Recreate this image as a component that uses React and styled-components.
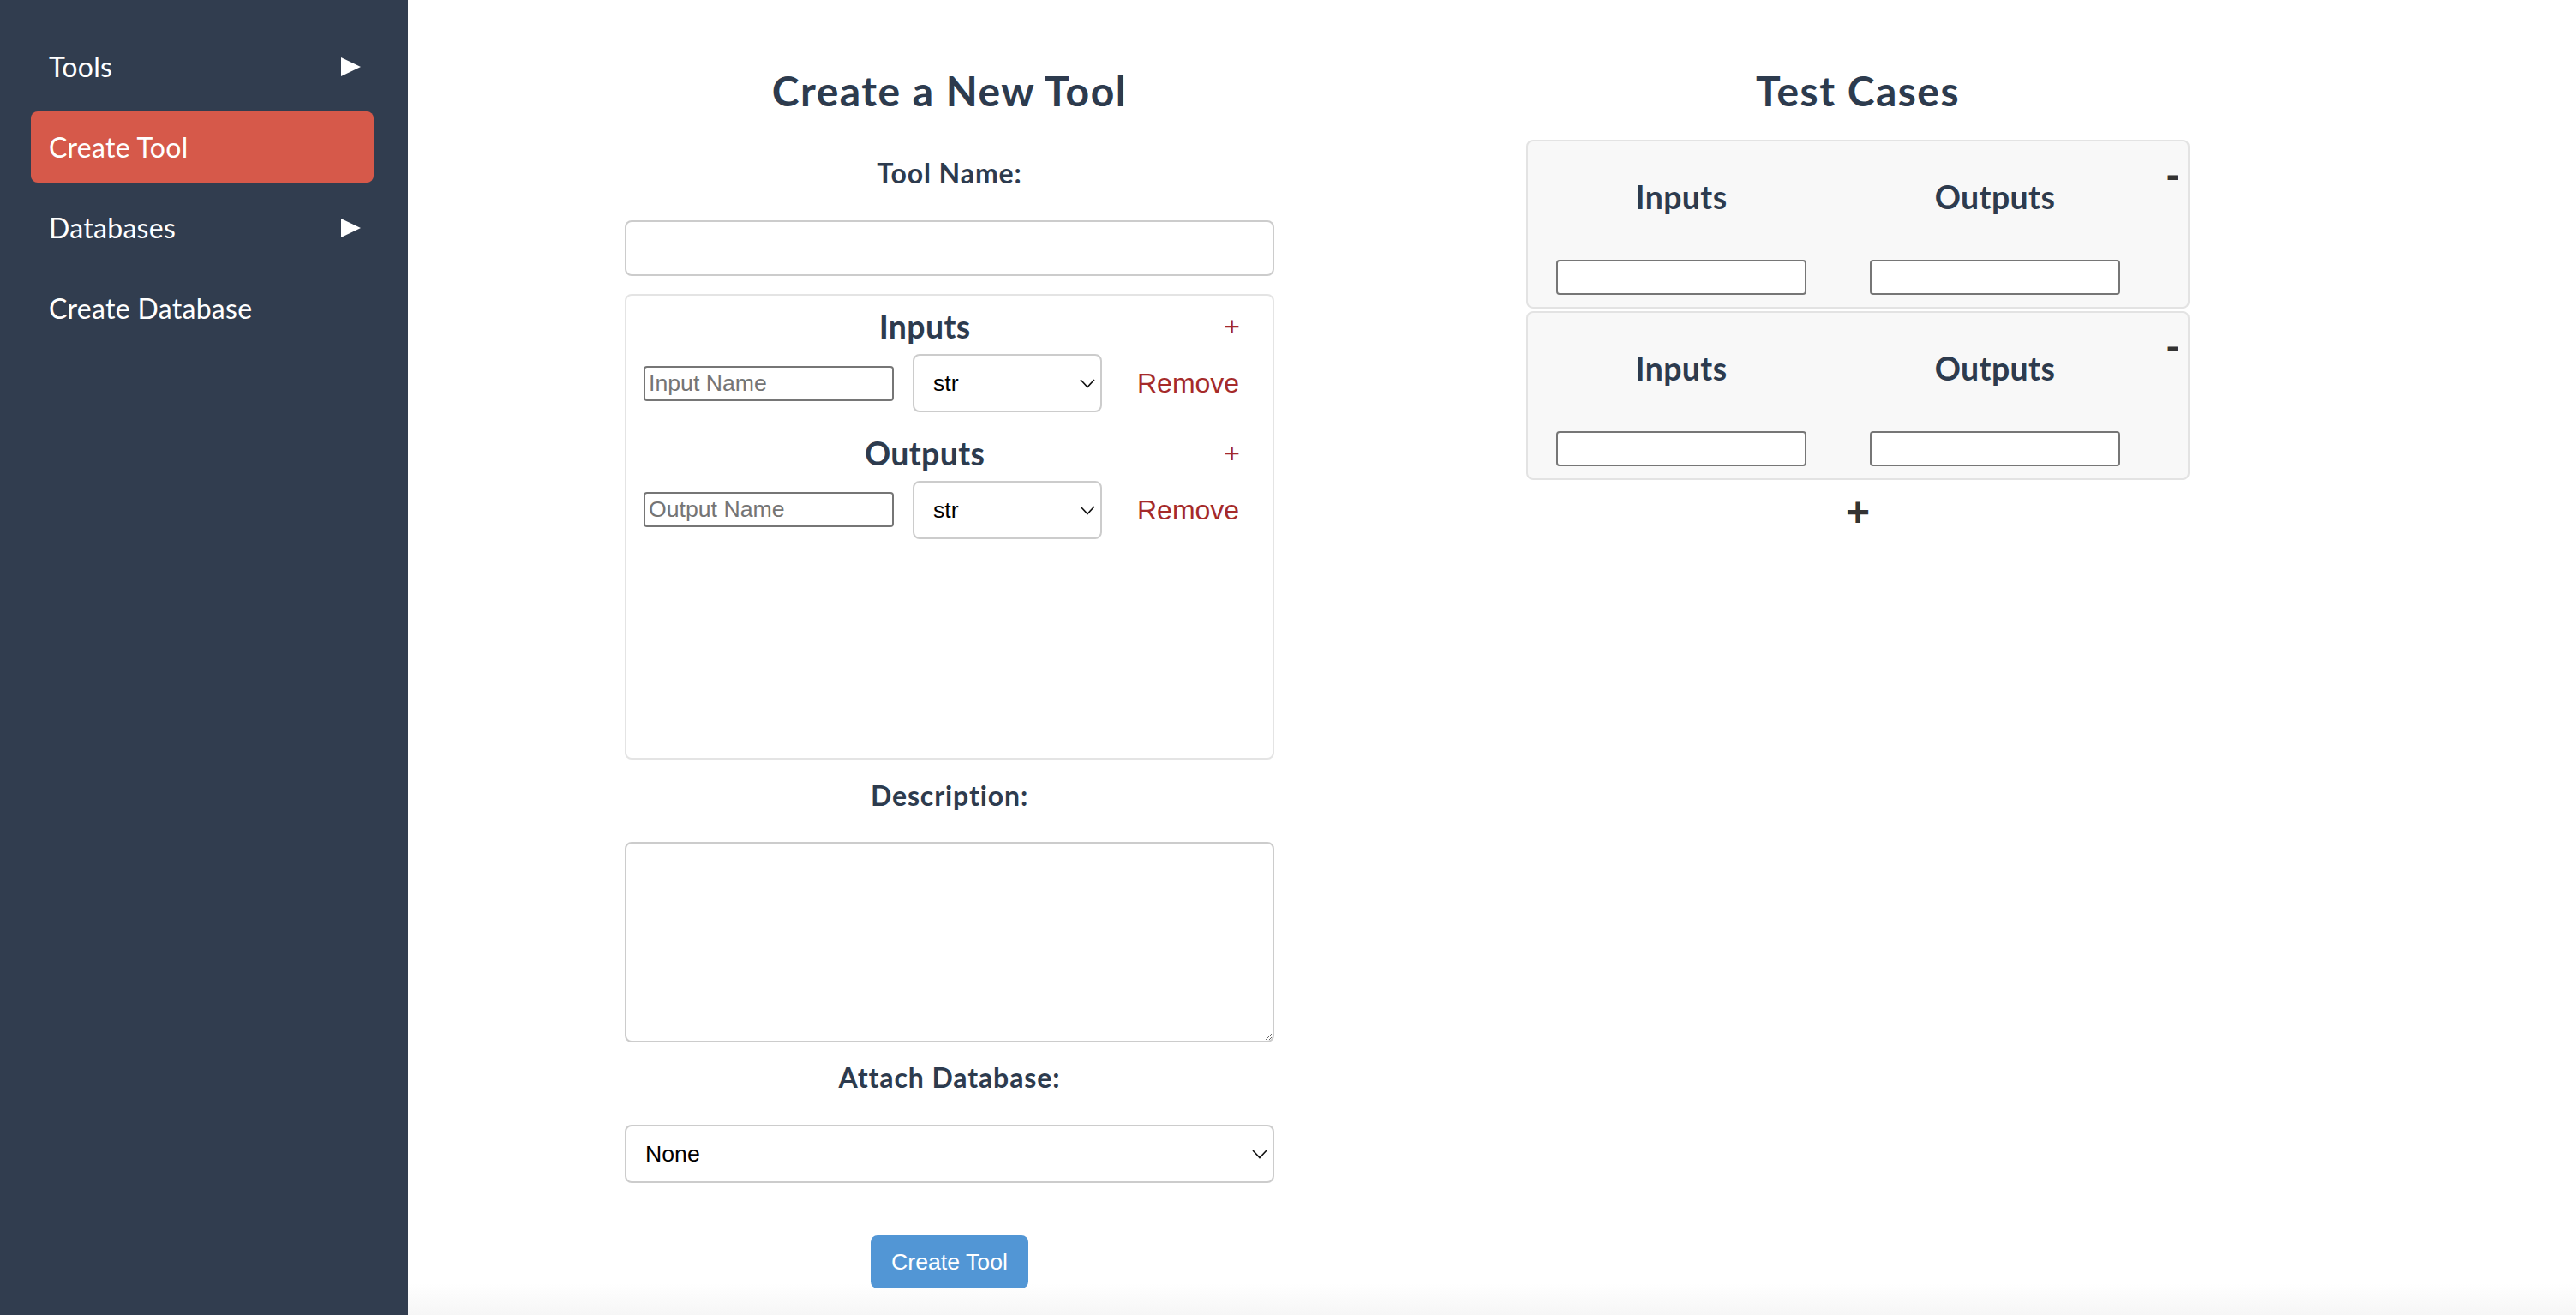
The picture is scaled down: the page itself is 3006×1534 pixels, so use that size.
import React from "react";
import styled, { createGlobalStyle } from "styled-components";

const GlobalStyle = createGlobalStyle`
  html, body { margin: 0; padding: 0; }
  body {
    font-family: Lato, "Noto Sans", "Open Sans", sans-serif;
    color: #2d3b4e;
    background: #ffffff;
  }
  * { box-sizing: border-box; }
`;

const Page = styled.div`
  display: flex;
  min-height: 100vh;
`;

const Sidebar = styled.nav`
  width: 476px;
  flex-shrink: 0;
  background: #313d4f;
  padding: 36px 40px 0 36px;
  display: flex;
  flex-direction: column;
  gap: 11px;
`;

const NavItem = styled.div`
  height: 83px;
  padding: 0 15px 0 21px;
  border-radius: 8px;
  display: flex;
  align-items: center;
  justify-content: space-between;
  background: ${(p) => (p.$active ? "#d6594a" : "transparent")};
  color: #ffffff;
  font-family: Lato, sans-serif;
  font-size: 32px;
  letter-spacing: 0.3px;
  line-height: 1;
`;

const Caret = styled.span`
  width: 0;
  height: 0;
  border-left: 23px solid #ffffff;
  border-top: 11px solid transparent;
  border-bottom: 11px solid transparent;
`;

const Main = styled.main`
  flex: 1;
  display: flex;
  align-items: flex-start;
  gap: 294px;
  padding: 82px 0 0 253px;
  background: linear-gradient(180deg, #ffffff 97.6%, #f6f6f6 100%);
`;

const FormColumn = styled.section`
  width: 758px;
  display: flex;
  flex-direction: column;
`;

const Title = styled.h2`
  margin: 0 0 ${(p) => p.$gap || 0}px;
  font-size: 48px;
  line-height: 1;
  font-weight: 700;
  letter-spacing: 1.5px;
  text-align: center;
  color: #2d3b4e;
`;

const Label = styled.label`
  display: block;
  margin: ${(p) => p.$top || 0}px 0 ${(p) => p.$bottom || 0}px;
  font-size: 32px;
  line-height: 1;
  font-weight: 700;
  letter-spacing: 0.9px;
  text-align: center;
  color: #2d3b4e;
`;

const WideInput = styled.input`
  width: 100%;
  height: 65px;
  border: 2px solid #cccccc;
  border-radius: 8px;
  background: #fff;
  margin: 0 0 21px;
  padding: 0 22px;
  font: 26.67px "Liberation Sans", Arial, sans-serif;
  outline: none;
`;

const Panel = styled.div`
  height: 543px;
  border: 2px solid #e4e4e4;
  border-radius: 8px;
  padding: 17px 38px 0 20px;
`;

const SectionHeader = styled.div`
  display: flex;
  align-items: center;
  margin-top: ${(p) => p.$top || 0}px;
`;

const SectionTitle = styled.h3`
  flex: 1;
  margin: 0;
  font-size: 37.44px;
  line-height: 1;
  font-weight: 700;
  letter-spacing: 0.4px;
  text-align: center;
  color: #2d3b4e;
`;

const AddButton = styled.button`
  margin-left: 21px;
  padding: 0;
  border: none;
  background: none;
  color: #a52a2a;
  font: 32px "Liberation Sans", Arial, sans-serif;
  line-height: 1;
  cursor: pointer;
`;

const FieldRow = styled.div`
  display: flex;
  align-items: center;
  gap: 22px;
  margin-top: ${(p) => p.$top || 0}px;
`;

const SmallInput = styled.input`
  flex-shrink: 0;
  width: 292px;
  height: 41px;
  border: 2px solid #767676;
  border-radius: 4px;
  background: #fff;
  padding: 0 4px;
  font: 26.67px "Liberation Sans", Arial, sans-serif;
  color: #000;
  outline: none;
  &::placeholder { color: #757575; }
`;

const SelectWrap = styled.div`
  position: relative;
  flex-shrink: 0;
  width: ${(p) => p.$width};
  height: 68px;
`;

const Select = styled.select`
  appearance: none;
  -webkit-appearance: none;
  width: 100%;
  height: 100%;
  border: 2px solid #cccccc;
  border-radius: 8px;
  background: #ffffff;
  padding: 0 40px 0 22px;
  font: 26.67px "Liberation Sans", Arial, sans-serif;
  color: #000;
  outline: none;
`;

const Chevron = styled.svg`
  position: absolute;
  right: 8px;
  top: 50%;
  transform: translateY(-45%);
  pointer-events: none;
`;

const RemoveButton = styled.button`
  margin-left: 19px;
  padding: 0;
  border: none;
  background: none;
  color: #a52a2a;
  font: 32px "Liberation Sans", Arial, sans-serif;
  line-height: 1;
  cursor: pointer;
`;

const TextArea = styled.textarea`
  width: 100%;
  height: 234px;
  border: 2px solid #cccccc;
  border-radius: 8px;
  padding: 10px;
  font: 26.67px "Liberation Sans", Arial, sans-serif;
  outline: none;
`;

const SubmitButton = styled.button`
  align-self: center;
  margin-top: 61px;
  height: 62px;
  padding: 0 24px;
  border: none;
  border-radius: 8px;
  background: #5296d5;
  color: #ffffff;
  font: 26.67px "Liberation Sans", Arial, sans-serif;
  cursor: pointer;
`;

const CasesColumn = styled.section`
  width: 774px;
  display: flex;
  flex-direction: column;
`;

const CaseCard = styled.div`
  position: relative;
  display: flex;
  gap: 74px;
  margin-top: ${(p) => p.$top || 0}px;
  padding: 45.6px 0 14px 33px;
  background: #f8f8f8;
  border: 2px solid #e3e3e3;
  border-radius: 8px;
`;

const CaseColumn = styled.div`
  width: 292px;
  display: flex;
  flex-direction: column;
  align-items: center;
`;

const CaseHeading = styled.h3`
  margin: 0 0 55px;
  font-size: 37.44px;
  line-height: 1;
  font-weight: 700;
  letter-spacing: 0.4px;
  color: #2d3b4e;
`;

const RemoveCase = styled.button`
  position: absolute;
  top: 15px;
  right: 10px;
  padding: 0;
  border: none;
  background: none;
  color: #333;
  font: 700 46px "Liberation Sans", Arial, sans-serif;
  line-height: 1;
  cursor: pointer;
`;

const AddCase = styled.button`
  align-self: center;
  margin-top: 14px;
  padding: 0;
  border: none;
  background: none;
  color: #333;
  font: 700 48px "Liberation Sans", Arial, sans-serif;
  line-height: 1;
  cursor: pointer;
`;

const ChevronIcon = () => (
  <Chevron width="18" height="11" viewBox="0 0 18 11">
    <polyline points="1,1 9,9.5 17,1" fill="none" stroke="#111" strokeWidth="1.6" />
  </Chevron>
);

const TypeSelect = ({ width, children }) => (
  <SelectWrap $width={width}>
    <Select defaultValue={children[0]}>
      {children.map((c) => (
        <option key={c}>{c}</option>
      ))}
    </Select>
    <ChevronIcon />
  </SelectWrap>
);

const TestCase = ({ top }) => (
  <CaseCard $top={top}>
    <CaseColumn>
      <CaseHeading>Inputs</CaseHeading>
      <SmallInput />
    </CaseColumn>
    <CaseColumn>
      <CaseHeading>Outputs</CaseHeading>
      <SmallInput />
    </CaseColumn>
    <RemoveCase>-</RemoveCase>
  </CaseCard>
);

export default function App() {
  return (
    <>
      <GlobalStyle />
      <Page>
        <Sidebar>
          <NavItem>
            <span>Tools</span>
            <Caret />
          </NavItem>
          <NavItem $active>
            <span>Create Tool</span>
          </NavItem>
          <NavItem>
            <span>Databases</span>
            <Caret />
          </NavItem>
          <NavItem>
            <span>Create Database</span>
          </NavItem>
        </Sidebar>
        <Main>
          <FormColumn>
            <Title $gap={56}>Create a New Tool</Title>
            <Label $bottom={39}>Tool Name:</Label>
            <WideInput />
            <Panel>
              <SectionHeader>
                <SectionTitle>Inputs</SectionTitle>
                <AddButton>+</AddButton>
              </SectionHeader>
              <FieldRow $top={14}>
                <SmallInput placeholder="Input Name" />
                <TypeSelect width="221px">{["str", "int", "float", "bool"]}</TypeSelect>
                <RemoveButton>Remove</RemoveButton>
              </FieldRow>
              <SectionHeader $top={29}>
                <SectionTitle>Outputs</SectionTitle>
                <AddButton>+</AddButton>
              </SectionHeader>
              <FieldRow $top={13}>
                <SmallInput placeholder="Output Name" />
                <TypeSelect width="221px">{["str", "int", "float", "bool"]}</TypeSelect>
                <RemoveButton>Remove</RemoveButton>
              </FieldRow>
            </Panel>
            <Label $top={26} $bottom={38}>Description:</Label>
            <TextArea />
            <Label $top={25} $bottom={39}>Attach Database:</Label>
            <TypeSelect width="100%">{["None"]}</TypeSelect>
            <SubmitButton>Create Tool</SubmitButton>
          </FormColumn>
          <CasesColumn>
            <Title $gap={33}>Test Cases</Title>
            <TestCase />
            <TestCase top={3} />
            <AddCase>+</AddCase>
          </CasesColumn>
        </Main>
      </Page>
    </>
  );
}
